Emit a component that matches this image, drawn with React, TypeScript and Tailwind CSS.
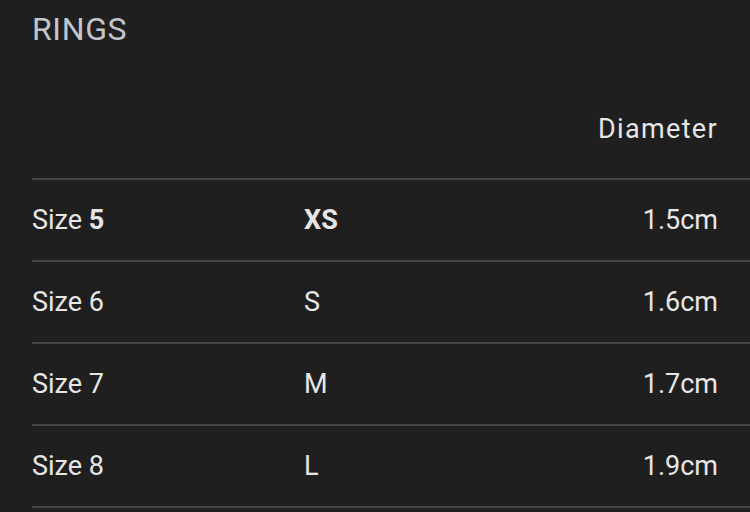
export default function App() {
  const rows = [
    { size: "5", label: "XS", diameter: "1.5cm", active: true },
    { size: "6", label: "S", diameter: "1.6cm" },
    { size: "7", label: "M", diameter: "1.7cm" },
    { size: "8", label: "L", diameter: "1.9cm" },
  ]

  return (
    <div
      className="h-[512px] w-[750px] overflow-hidden bg-[#1f1f1f] pl-8 text-[#e6e6e6]"
      style={{ fontFamily: "Roboto, 'Liberation Sans', sans-serif" }}
    >
      <h2 className="pt-[11px] text-[32px] leading-[36px] tracking-[0.02em] text-[#c3c5cc]">RINGS</h2>

      <div className="mt-[64px] flex h-[69px] items-start justify-end border-b-2 border-[#444444] pr-8">
        <span className="text-[27px] leading-[36px] tracking-[0.05em]">Diameter</span>
      </div>

      {rows.map((row) => (
        <div
          key={row.size}
          className="grid h-[82px] grid-cols-[272px_1fr_auto] items-center border-b-2 border-[#444444] pr-8 text-[27px]"
        >
          <div>
            Size {row.active ? <span className="font-bold">{row.size}</span> : row.size}
          </div>
          <div className={row.active ? "font-bold" : ""}>{row.label}</div>
          <div className="text-right">{row.diameter}</div>
        </div>
      ))}
    </div>
  )
}
